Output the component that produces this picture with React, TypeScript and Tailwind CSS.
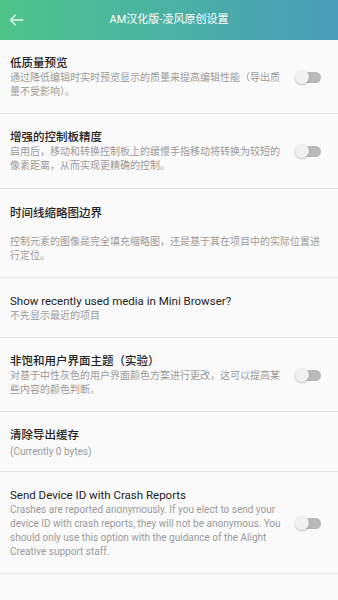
import React from "react";

type Item = {
  title: string;
  desc: string;
  toggle?: boolean;
  cjkTitle?: boolean;
  rowClass?: string;
  descClass?: string;
};

const items: Item[] = [
  {
    title: "低质量预览",
    desc: "通过降低编辑时实时预览显示的质量来提高编辑性能（导出质量不受影响）。",
    toggle: true,
    cjkTitle: true,
    rowClass: "pt-[15px] pb-[14px]",
  },
  {
    title: "增强的控制板精度",
    desc: "启用后，移动和转换控制板上的缓慢手指移动将转换为较短的像素距离，从而实现更精确的控制。",
    toggle: true,
    cjkTitle: true,
    rowClass: "pt-[15px] pb-[15px]",
  },
  {
    title: "时间线缩略图边界",
    desc: "控制元素的图像是完全填充缩略图，还是基于其在项目中的实际位置进行定位。",
    cjkTitle: true,
    rowClass: "pt-[16px] pb-[14px]",
    descClass: "mt-[14px]",
  },
  {
    title: "Show recently used media in Mini Browser?",
    desc: "不先显示最近的项目",
    rowClass: "pt-[15px] pb-[14px]",
  },
  {
    title: "非饱和用户界面主题（实验）",
    desc: "对基于中性灰色的用户界面颜色方案进行更改，这可以提高某些内容的颜色判断。",
    toggle: true,
    cjkTitle: true,
    rowClass: "pt-[15px] pb-[14px]",
  },
  {
    title: "清除导出缓存",
    desc: "(Currently 0 bytes)",
    cjkTitle: true,
    rowClass: "pt-[15px] pb-[12px]",
    descClass: "mt-[2px]",
  },
  {
    title: "Send Device ID with Crash Reports",
    desc: "Crashes are reported anonymously. If you elect to send your device ID with crash reports, they will not be anonymous. You should only use this option with the guidance of the Alight Creative support staff.",
    toggle: true,
    rowClass: "pt-[15px] pb-[14px]",
  },
];

const Toggle = () => (
  <div className="relative ml-[10px] w-[26px] h-[14px] shrink-0 flex items-center">
    <div className="absolute left-[2px] right-0 h-[11px] rounded-full bg-[#b9b9b9]" />
    <div className="absolute left-0 w-[14px] h-[14px] rounded-full bg-[#f1f1f1] shadow-[0_1px_2px_rgba(0,0,0,0.25)]" />
  </div>
);

const SettingRow = ({ item }: { item: Item }) => (
  <div
    className={`flex items-center border-b border-[#e4e4e4] pl-[10px] pr-[17px] ${item.rowClass ?? ""}`}
  >
    <div className="flex-1 min-w-0">
      <div
        className={`text-[11.5px] leading-[16px] text-[#222] ${
          item.cjkTitle ? "font-medium" : "font-normal"
        }`}
      >
        {item.title}
      </div>
      <div
        className={`text-[10px] leading-[14px] text-[#9a9a9a] ${item.descClass ?? ""}`}
      >
        {item.desc}
      </div>
    </div>
    {item.toggle && <Toggle />}
  </div>
);

export default function App() {
  return (
    <div
      className="w-[338px] h-[600px] bg-[#fafafa] overflow-hidden"
      style={{ fontFamily: '"Roboto", "Noto Sans CJK SC", sans-serif' }}
    >
      <div className="relative h-[40px] flex items-center justify-center bg-gradient-to-r from-[#4ec58a] to-[#4a9db9]">
        <svg
          className="absolute left-[9px] top-[14px]"
          width="15"
          height="12"
          viewBox="0 0 15 12"
          fill="none"
          stroke="rgba(255,255,255,0.85)"
          strokeWidth="1.3"
          strokeLinecap="round"
          strokeLinejoin="round"
        >
          <path d="M14 6H1.5M6.5 1L1.5 6l5 5" />
        </svg>
        <span className="text-[11px] text-white">AM汉化版-凌风原创设置</span>
      </div>
      {items.map((it) => (
        <SettingRow key={it.title} item={it} />
      ))}
    </div>
  );
}
